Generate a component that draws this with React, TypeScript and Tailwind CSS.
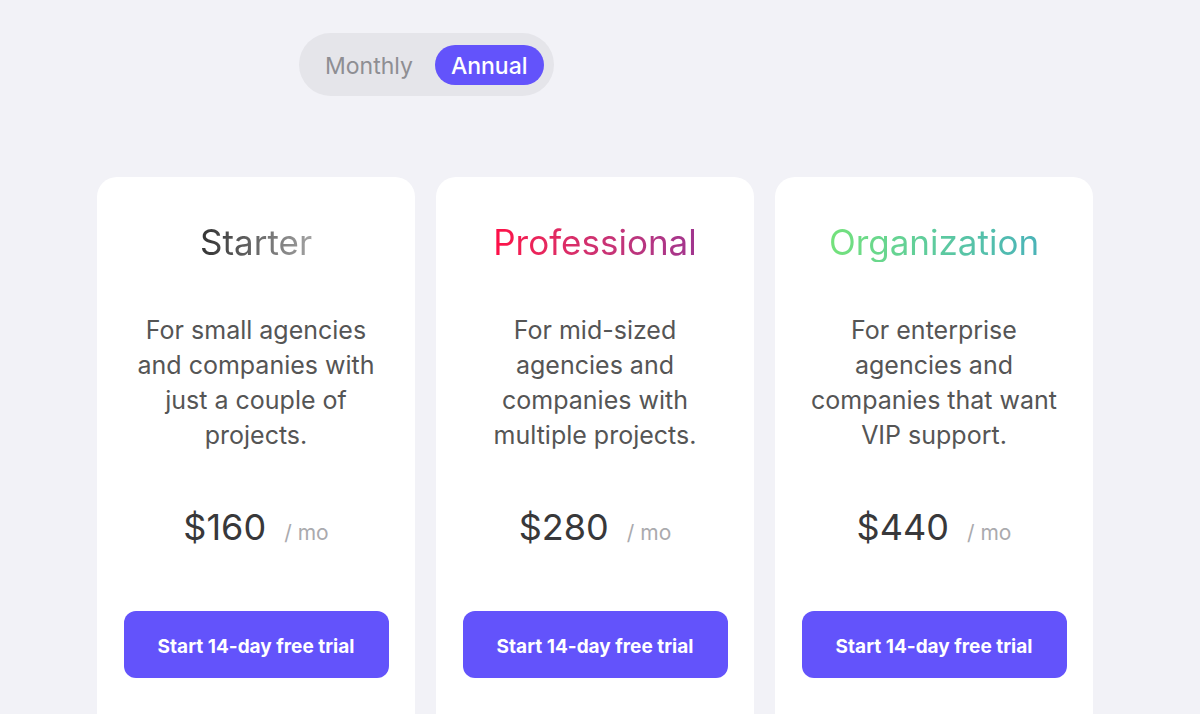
import { useState } from 'react';

type Plan = {
  name: string;
  gradient: string;
  description: string;
  price: number;
};

const PLANS: Plan[] = [
  {
    name: 'Starter',
    gradient: 'bg-gradient-to-r from-[#333333] to-[#a3a3a3]',
    description: 'For small agencies and companies with just a couple of projects.',
    price: 160,
  },
  {
    name: 'Professional',
    gradient: 'bg-gradient-to-r from-[#ff0a45] to-[#a0358f]',
    description: 'For mid-sized agencies and companies with multiple projects.',
    price: 280,
  },
  {
    name: 'Organization',
    gradient: 'bg-gradient-to-r from-[#74e27a] to-[#4ab3b8]',
    description: 'For enterprise agencies and companies that want VIP support.',
    price: 440,
  },
];

export default function App() {
  const [billing, setBilling] = useState<'monthly' | 'annual'>('annual');

  return (
    <div
      className="min-h-[714px] bg-[#f2f2f7] overflow-hidden"
      style={{ fontFamily: 'Inter, "Noto Sans", sans-serif' }}
    >
      <div className="pl-[299px] pt-[33px]">
        <div className="inline-flex items-center h-[63px] rounded-full bg-[#e5e5ea] pl-[16px] pr-[10px] gap-[12px]">
          <button
            type="button"
            onClick={() => setBilling('monthly')}
            className={
              billing === 'monthly'
                ? 'h-[40px] px-[16px] pt-[3px] rounded-full bg-[#6353fb] text-white text-[23px] font-medium'
                : 'h-[40px] px-[10px] pt-[3px] rounded-full text-[#8e8e93] text-[23px]'
            }
          >
            Monthly
          </button>
          <button
            type="button"
            onClick={() => setBilling('annual')}
            className={
              billing === 'annual'
                ? 'h-[40px] px-[16px] pt-[3px] rounded-full bg-[#6353fb] text-white text-[23px] font-medium'
                : 'h-[40px] px-[10px] pt-[3px] rounded-full text-[#8e8e93] text-[23px]'
            }
          >
            Annual
          </button>
        </div>
      </div>

      <div className="flex gap-[21px] pl-[97px] pt-[81px]">
        {PLANS.map((plan) => (
          <PlanCard key={plan.name} plan={plan} />
        ))}
      </div>
    </div>
  );
}

function PlanCard({ plan }: { plan: Plan }) {
  return (
    <div className="w-[318px] h-[560px] bg-white rounded-[20px] flex flex-col items-center pt-[45px]">
      <h2
        className={`text-[35px] leading-[40px] font-normal bg-clip-text text-transparent ${plan.gradient}`}
      >
        {plan.name}
      </h2>
      <p className="mt-[51px] w-[264px] text-center text-[25px] leading-[35px] text-[#555555]">
        {plan.description}
      </p>
      <div className="mt-[50px] flex items-baseline gap-[18px] h-[48px]">
        <span className="text-[36px] leading-[48px] text-[#38383a]">${plan.price}</span>
        <span className="text-[21px] text-[#aaaaae]">/ mo</span>
      </div>
      <button
        type="button"
        className="mt-[60px] w-[265px] h-[67px] pt-[6px] rounded-[12px] bg-[#6353fb] text-white text-[19px] font-bold"
      >
        Start 14-day free trial
      </button>
    </div>
  );
}
